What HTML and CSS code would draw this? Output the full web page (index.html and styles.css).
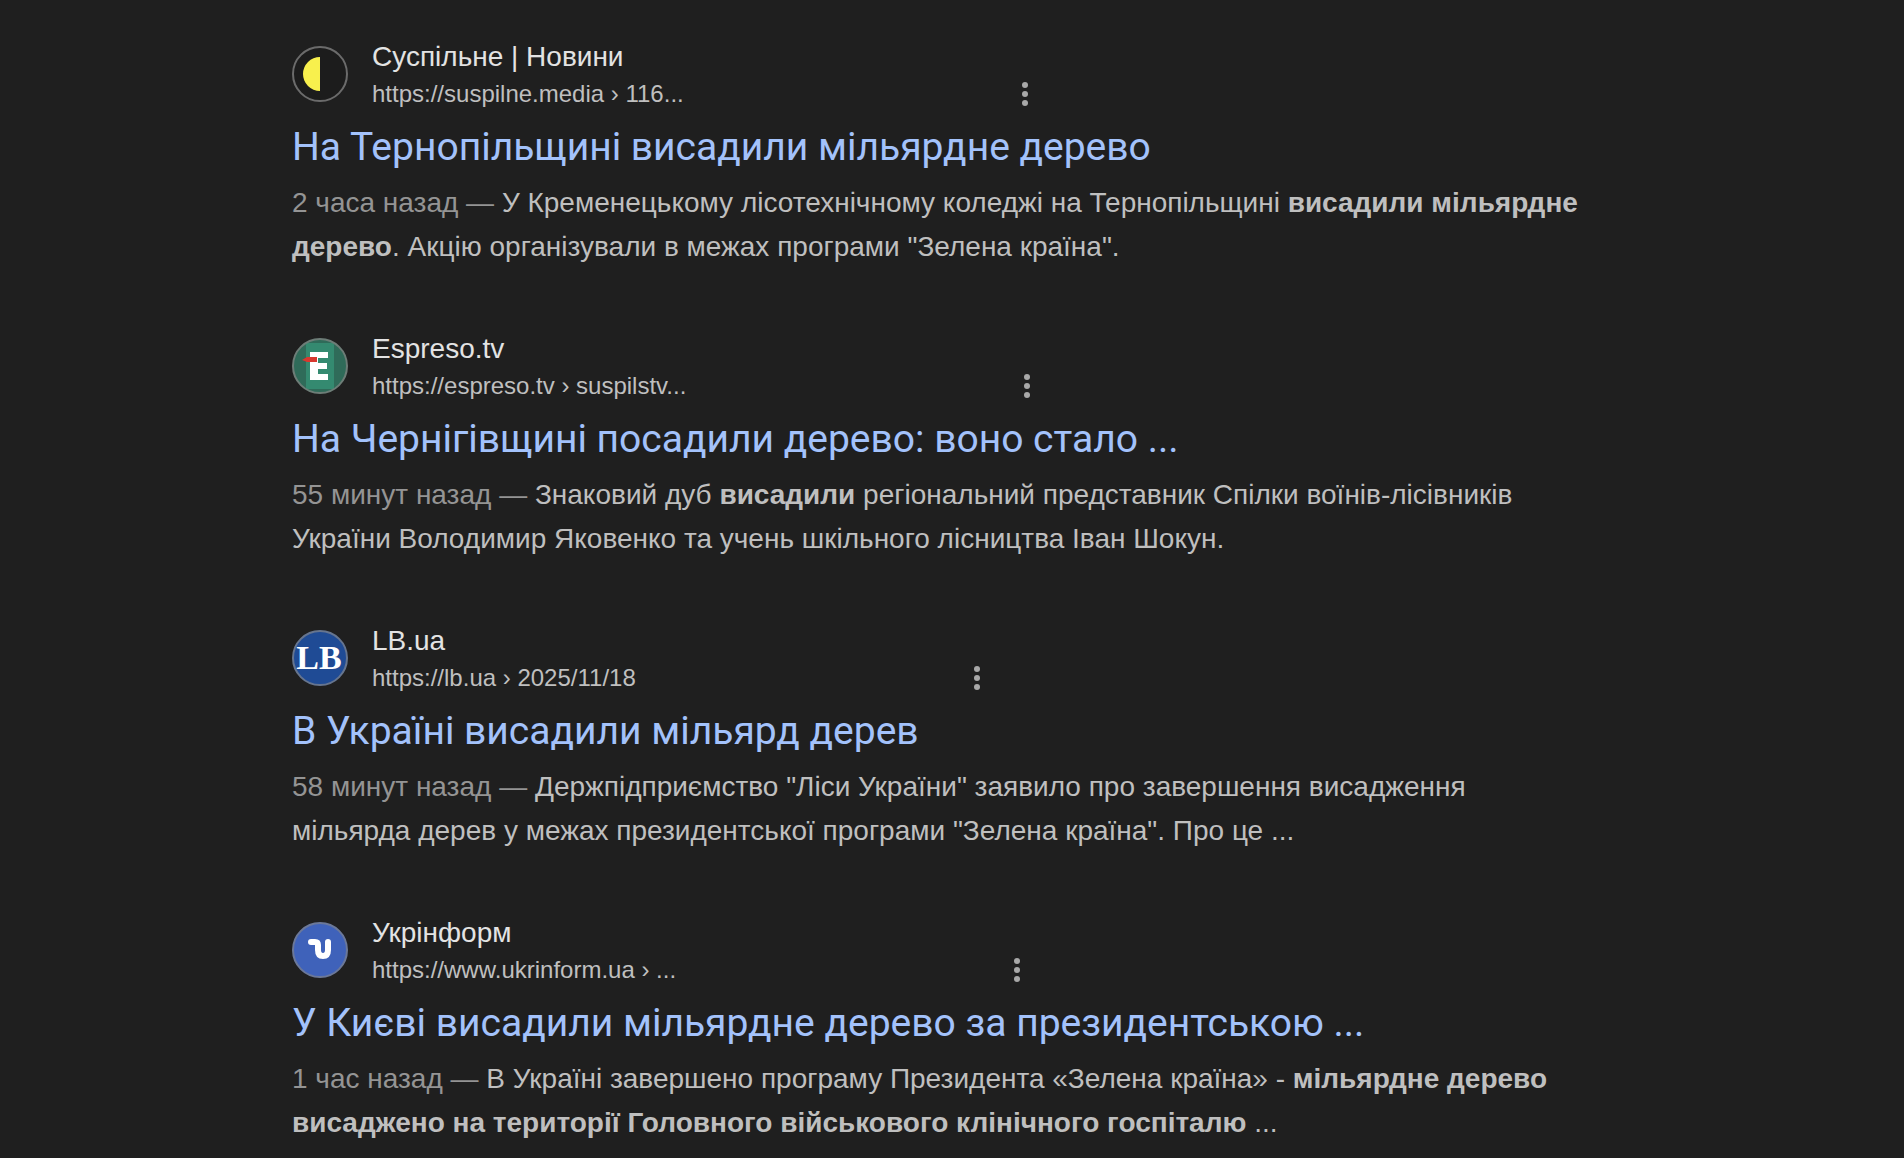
FILE: index.html
```html
<!DOCTYPE html>
<html lang="uk">

<head>
    <meta charset="UTF-8">
    <meta name="viewport" content="width=device-width, initial-scale=1.0">
    <title>Результати пошуку</title>
    <link rel="stylesheet" href="styles.css">
</head>

<body>
    <main class="results">
        <article class="result">
            <div class="source">
                <svg class="favicon" viewBox="0 0 56 56" aria-hidden="true">
                    <circle cx="28" cy="28" r="27" fill="#1c1c1c" stroke="#6b6b6b" stroke-width="2" />
                    <path d="M28 11v34a17 17 0 0 1 0-34z" fill="#f8f04d" />
                </svg>
                <div class="source-text">
                    <span class="site-name">Суспільне | Новини</span>
                    <cite class="site-url">https://suspilne.media › 116...</cite>
                </div>
                <button class="more" type="button" aria-label="Про цей результат">
                    <svg viewBox="0 0 6 24"><circle cx="3" cy="3" r="3" /><circle cx="3" cy="12" r="3" /><circle cx="3" cy="21" r="3" /></svg>
                </button>
            </div>
            <h3 class="title"><a href="#">На Тернопільщині висадили мільярдне дерево</a></h3>
            <p class="snippet"><span class="date">2 часа назад — </span>У Кременецькому лісотехнічному коледжі на Тернопільщині <b>висадили мільярдне дерево</b>. Акцію організували в межах програми "Зелена країна".</p>
        </article>

        <article class="result">
            <div class="source">
                <svg class="favicon" viewBox="0 0 56 56" aria-hidden="true">
                    <circle cx="28" cy="28" r="27" fill="#2f6b59" />
                    <path d="M14 5h28v46H14z" fill="#348a70" />
                    <path d="M18 14h18v6H26v5h9v6h-9v5h10v6H18z" fill="#fff" />
                    <path d="M10 22l5-3h10v5H15z" fill="#d8382f" />
                    <circle cx="28" cy="28" r="27" fill="none" stroke="#6d7d77" stroke-width="2" />
                </svg>
                <div class="source-text">
                    <span class="site-name">Espreso.tv</span>
                    <cite class="site-url">https://espreso.tv › suspilstv...</cite>
                </div>
                <button class="more" type="button" aria-label="Про цей результат">
                    <svg viewBox="0 0 6 24"><circle cx="3" cy="3" r="3" /><circle cx="3" cy="12" r="3" /><circle cx="3" cy="21" r="3" /></svg>
                </button>
            </div>
            <h3 class="title"><a href="#">На Чернігівщині посадили дерево: воно стало ...</a></h3>
            <p class="snippet"><span class="date">55 минут назад — </span>Знаковий дуб <b>висадили</b> регіональний представник Спілки воїнів-лісівників України Володимир Яковенко та учень шкільного лісництва Іван Шокун.</p>
        </article>

        <article class="result">
            <div class="source">
                <svg class="favicon" viewBox="0 0 56 56" aria-hidden="true">
                    <circle cx="28" cy="28" r="27" fill="#1f4b95" stroke="#66758f" stroke-width="2" />
                    <text class="favicon-text" x="27" y="39" text-anchor="middle">LB</text>
                </svg>
                <div class="source-text">
                    <span class="site-name">LB.ua</span>
                    <cite class="site-url">https://lb.ua › 2025/11/18</cite>
                </div>
                <button class="more" type="button" aria-label="Про цей результат">
                    <svg viewBox="0 0 6 24"><circle cx="3" cy="3" r="3" /><circle cx="3" cy="12" r="3" /><circle cx="3" cy="21" r="3" /></svg>
                </button>
            </div>
            <h3 class="title"><a href="#">В Україні висадили мільярд дерев</a></h3>
            <p class="snippet"><span class="date">58 минут назад — </span>Держпідприємство "Ліси України" заявило про завершення висадження мільярда дерев у межах президентської програми "Зелена країна". Про це ...</p>
        </article>

        <article class="result">
            <div class="source">
                <svg class="favicon" viewBox="0 0 56 56" aria-hidden="true">
                    <circle cx="28" cy="28" r="27" fill="#3f62ba" stroke="#6b7899" stroke-width="2" />
                    <path d="M19 20h4q3 0 3 3v5q0 6 5 6t5-6v-8" fill="none" stroke="#fff" stroke-width="6" stroke-linecap="round" />
                </svg>
                <div class="source-text">
                    <span class="site-name">Укрінформ</span>
                    <cite class="site-url">https://www.ukrinform.ua › ...</cite>
                </div>
                <button class="more" type="button" aria-label="Про цей результат">
                    <svg viewBox="0 0 6 24"><circle cx="3" cy="3" r="3" /><circle cx="3" cy="12" r="3" /><circle cx="3" cy="21" r="3" /></svg>
                </button>
            </div>
            <h3 class="title"><a href="#">У Києві висадили мільярдне дерево за президентською ...</a></h3>
            <p class="snippet"><span class="date">1 час назад — </span>В Україні завершено програму Президента «Зелена країна» - <b>мільярдне дерево висаджено на території Головного військового клінічного госпіталю</b> ...</p>
        </article>
    </main>
</body>

</html>
```
FILE: styles.css
```css
body {
    margin: 0;
    background: #1f1f1f;
    color: #bfbfbf;
    font-family: "Liberation Sans", Arial, sans-serif;
}

.results {
    display: flex;
    flex-direction: column;
    gap: 60px;
    max-width: 1298px;
    padding: 37px 24px 0 292px;
}

.source {
    display: flex;
    align-items: center;
}

.favicon {
    width: 56px;
    height: 56px;
    margin-right: 24px;
}

.favicon-text {
    font: bold 34px "Liberation Serif", serif;
    fill: #fff;
}

.source-text {
    display: flex;
    flex-direction: column;
}

.site-name {
    color: #e3e3e3;
    font-size: 28px;
    line-height: 40px;
}

.site-url {
    font-size: 24px;
    font-style: normal;
    line-height: 34px;
}

.more {
    align-self: flex-end;
    display: flex;
    align-items: center;
    height: 34px;
    margin-left: 338px;
    padding: 0;
    border: 0;
    background: none;
    cursor: pointer;
}

.more svg {
    width: 6px;
    height: 24px;
    fill: #a8a8a8;
}

.title {
    margin: 0;
    padding: 10px 0 8px;
    font-family: Roboto, sans-serif;
    font-size: 39px;
    font-weight: 400;
    line-height: 52px;
}

.title a {
    color: #a3c2fb;
    text-decoration: none;
}

.title a:hover {
    text-decoration: underline;
}

.snippet {
    margin: 0;
    font-size: 28px;
    line-height: 44px;
}

.date {
    color: #949494;
}
```
